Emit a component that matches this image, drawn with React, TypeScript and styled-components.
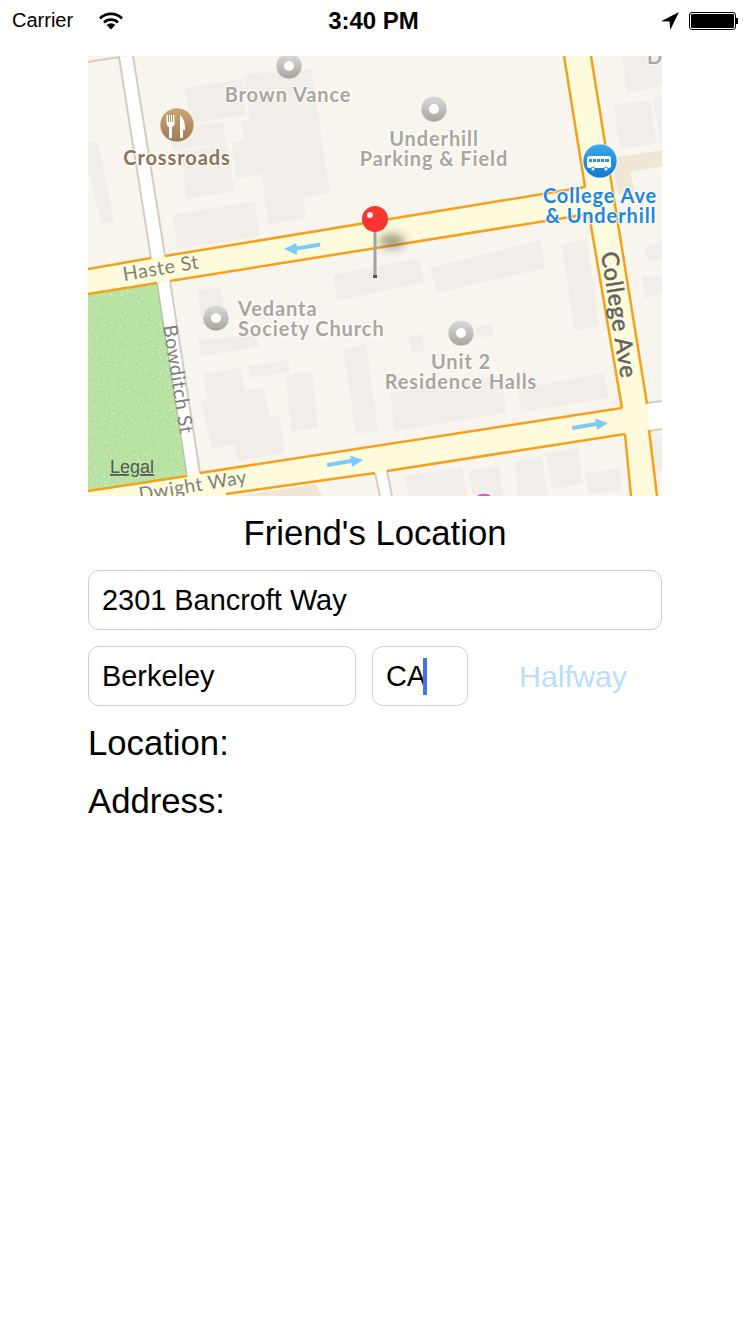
import styled, { createGlobalStyle } from 'styled-components';

const BUILDINGS: string[] = [
  '185,88 242,79 246,115 191,123',
  '171,128 223,122 226,143 173,150',
  '181,151 228,145 234,191 187,199',
  '244,74 311,69 330,192 303,198 306,219 268,224 262,175 236,178 232,143 245,141 241,122 250,119',
  '173,215 255,201 260,236 177,249',
  '88,143 98,142 114,221 101,224 88,170',
  '622,56 662,56 662,86 627,93',
  '614,104 650,101 657,143 620,149',
  '653,98 662,96 662,143 660,143',
  '644,248 662,241 662,260 648,261',
  '431,268 540,240 545,268 436,293',
  '561,244 587,239 599,326 575,331',
  '333,275 420,258 424,282 337,301',
  '198,290 221,287 225,320 202,322',
  '198,340 256,335 259,347 201,356',
  '203,374 240,368 245,391 263,388 270,416 279,415 285,453 238,462 234,444 212,449 201,401 208,399',
  '249,366 288,360 290,372 251,378',
  '286,374 312,372 318,428 291,431',
  '343,349 366,344 378,431 356,434',
  '390,393 501,375 506,413 395,431',
  '518,389 605,373 608,398 521,412',
  '409,337 422,334 424,351 411,353',
  '475,328 492,323 494,335 478,338',
  '642,276 662,276 662,293 645,299',
  '405,476 462,467 467,496 408,496',
  '469,471 499,466 503,496 473,496',
  '515,461 542,458 548,496 518,496',
  '545,453 578,448 583,484 552,489',
  '585,473 620,469 621,491 588,494',
  '650,440 662,438 662,470 655,472',
];

const ROAD_EDGES: string[] = [
  '88,269 151,258',
  '165,256 585,187',
  '88,294 157,283',
  '170,281 589,214',
  '88,491 187,476',
  '200,473 622,408',
  '226,494 375,473',
  '387,471 625,434',
  '564,56 585,187',
  '589,214 622,408',
  '591,56 647,404',
  '649,430 657,496',
  '625,434 631,496',
];

const RINGS: Array<[number, number]> = [
  [289, 66],
  [434, 109],
  [216, 318],
  [461, 333],
];

function WifiIcon(): React.ReactElement {
  return (
    <svg width="24" height="18" viewBox="0 0 24 18">
      <path d="M1 6.500a15.500 15.500 0 0 1 22 0" fill="none" stroke="#000" strokeWidth="2.6" />
      <path d="M5 10.500a10 10 0 0 1 14 0" fill="none" stroke="#000" strokeWidth="2.6" />
      <path d="M12 17.500 7.700 13a6.200 6.200 0 0 1 8.600 0z" fill="#000" />
    </svg>
  );
}

function LocationIcon(): React.ReactElement {
  return (
    <svg width="18" height="18" viewBox="0 0 18 18">
      <path d="M18 0 0 9.200l8.600.4.6 8.400z" fill="#000" />
    </svg>
  );
}

function MapView(): React.ReactElement {
  return (
    <MapSvg viewBox="88 56 574 440">
      <defs>
        <linearGradient id="ring" x1="0" y1="0" x2="0" y2="1">
          <stop offset="0" stopColor="#dedcd8" />
          <stop offset="1" stopColor="#a5a39e" />
        </linearGradient>
        <linearGradient id="food" x1="0" y1="0" x2="0" y2="1">
          <stop offset="0" stopColor="#c9a478" />
          <stop offset="1" stopColor="#a07c50" />
        </linearGradient>
        <linearGradient id="bus" x1="0" y1="0" x2="0" y2="1">
          <stop offset="0" stopColor="#3fa9ea" />
          <stop offset="1" stopColor="#1478cf" />
        </linearGradient>
        <filter id="grain" x="0" y="0" width="100%" height="100%">
          <feTurbulence type="fractalNoise" baseFrequency="0.55" numOctaves="2" seed="4" />
          <feColorMatrix values="0 0 0 0 1  0 0 0 0 1  0 0 0 0 1  0 0 0 3.2 -1.75" />
          <feComposite in2="SourceGraphic" operator="in" />
        </filter>
        <filter id="blur" x="-60%" y="-100%" width="220%" height="300%">
          <feGaussianBlur stdDeviation="5" />
        </filter>
      </defs>

      <rect x="88" y="56" width="574" height="440" fill="#f8f4ee" />
      <path d="M612 158 662 150V166L630 172 635 192 618 194z" fill="#efe6d6" />
      <path d="M240 496 315 484 322 496z" fill="#efe6d6" />
      {BUILDINGS.map((points) => (
        <polygon key={points} points={points} fill="#f1ede8" />
      ))}

      <polygon points="88,294 157,283 187,476 88,491" fill="#b7e1a0" />
      <polygon points="88,294 157,283 187,476 88,491" fill="#b7e1a0" filter="url(#grain)" opacity="0.5" />

      <polygon points="120,58 132,56 165,256 151,258" fill="#fff" />
      <polygon points="157,283 170,281 200,473 187,476" fill="#fff" />
      <polygon points="375,473 387,471 392,496 379,496" fill="#fff" />
      <polygon points="647,404 662,402 662,428 649,430" fill="#fff" />
      <polyline points="88,62 119,57 151,258" fill="none" stroke="#d5cdc1" strokeWidth="2" />
      <polyline points="133,56 165,256" fill="none" stroke="#d5cdc1" strokeWidth="2" />
      <polyline points="157,283 187,476" fill="none" stroke="#b4c49c" strokeWidth="1.5" />
      <polyline points="170,281 200,473" fill="none" stroke="#d5cdc1" strokeWidth="2" />
      <polyline points="375,473 380,496" fill="none" stroke="#d5cdc1" strokeWidth="2" />
      <polyline points="387,471 392,496" fill="none" stroke="#d5cdc1" strokeWidth="2" />
      <polyline points="647,403 662,401" fill="none" stroke="#d5cdc1" strokeWidth="2" />
      <polyline points="649,431 662,429" fill="none" stroke="#d5cdc1" strokeWidth="2" />

      <polygon points="88,269 585,187 589,214 88,294" fill="#fdfbdc" />
      <polygon points="564,56 591,56 647,404 622,408" fill="#fdfbdc" />
      <polygon points="88,491 622,408 649,430 226,496 88,496" fill="#fdfbdc" />
      <polygon points="622,408 647,404 657,496 631,496 625,434" fill="#fdfbdc" />
      {ROAD_EDGES.map((points) => (
        <RoadEdge key={points} points={points} />
      ))}

      <Arrow d="M320 242.500 297 246.500 296 243 284 249 297 255 296.800 250.500 320.500 246.500z" />
      <Arrow d="M327 463 351 459 350 455.500 363 460 352 467 351.500 463 327.500 467z" />
      <Arrow d="M572 426 596 422 595 418.500 608 423 597 430 596.500 426 572.500 430z" />

      <RoadLabel x="124" y="281" transform="rotate(-9.5 124 281)" $size={19.500}>
        Haste St
      </RoadLabel>
      <RoadLabel x="140" y="501" transform="rotate(-9.5 140 501)" $size={19}>
        Dwight Way
      </RoadLabel>
      <RoadLabel x="163" y="326" transform="rotate(81 163 326)" $size={19.500}>
        Bowditch St
      </RoadLabel>
      <RoadLabel x="601" y="253" transform="rotate(81 601 253)" $size={23.500} $dark>
        College Ave
      </RoadLabel>
      <LegalLabel x="110" y="473">
        Legal
      </LegalLabel>

      {RINGS.map(([cx, cy]) => (
        <g key={`${cx}-${cy}`}>
          <circle cx={cx} cy={cy} r="13" fill="url(#ring)" stroke="#fff" strokeOpacity="0.5" />
          <circle cx={cx} cy={cy} r="5" fill="#fff" />
        </g>
      ))}

      <circle cx="177" cy="125" r="17" fill="url(#food)" stroke="#fff" strokeOpacity="0.6" />
      <path d="M171 115v7h-1v-7h-1v7h-1v-7h-1.500v9q0 2 2.500 3v11h3v-11q2.500-1 2.500-3v-9h-1.500v7h-1v-7z" fill="#fff" />
      <path d="M180 115q5 4 5 13v2h-2v8h-3z" fill="#fff" />

      <circle cx="600" cy="161" r="17" fill="url(#bus)" stroke="#fff" strokeOpacity="0.6" />
      <path d="M590 156h18q3 0 3 3v7q0 2-2 2h-20q-2 0-2-2v-7q0-3 3-3z" fill="#fff" />
      <path d="M589 159h3v3h-3zM593 159h3v3h-3zM597 159h3v3h-3zM601 159h3v3h-3zM605 159h4v3h-4z" fill="#2a8fdc" />
      <circle cx="593" cy="169" r="2" fill="#fff" stroke="#2a8fdc" />
      <circle cx="606" cy="169" r="2" fill="#fff" stroke="#2a8fdc" />

      <PlaceLabel x="288" y="102">Brown Vance</PlaceLabel>
      <PlaceLabel x="434" y="146">Underhill</PlaceLabel>
      <PlaceLabel x="434" y="166">Parking &amp; Field</PlaceLabel>
      <PlaceLabel x="177" y="165" $tone="#8b7458">Crossroads</PlaceLabel>
      <PlaceLabel x="238" y="316" $align="start">Vedanta</PlaceLabel>
      <PlaceLabel x="238" y="336" $align="start">Society Church</PlaceLabel>
      <PlaceLabel x="461" y="369">Unit 2</PlaceLabel>
      <PlaceLabel x="461" y="389">Residence Halls</PlaceLabel>
      <PlaceLabel x="600" y="203" $tone="#1c86e0">College Ave</PlaceLabel>
      <PlaceLabel x="601" y="223" $tone="#1c86e0">&amp; Underhill</PlaceLabel>
      <PlaceLabel x="647" y="64" $align="start">D</PlaceLabel>

      <circle cx="484" cy="505" r="12" fill="#d75dbd" stroke="#fff" />

      <ellipse cx="392" cy="241" rx="13" ry="7" fill="#5f5f48" opacity="0.6" filter="url(#blur)" />
      <rect x="373.500" y="230" width="3" height="47" fill="#a2a2a6" />
      <rect x="373" y="275" width="4" height="3" fill="#55554f" />
      <circle cx="375" cy="219" r="13" fill="#fb3532" />
      <circle cx="370" cy="215" r="3" fill="#fff" opacity="0.9" />
    </MapSvg>
  );
}

function App(): React.ReactElement {
  return (
    <>
      <GlobalStyle />
      <StatusBar>
        <StatusSide>
          <Carrier>Carrier</Carrier>
          <WifiIcon />
        </StatusSide>
        <Clock>3:40 PM</Clock>
        <StatusSide $end>
          <LocationIcon />
          <Battery>
            <BatteryLevel />
          </Battery>
        </StatusSide>
      </StatusBar>

      <Content>
        <MapView />
        <Title>Friend's Location</Title>
        <Field>2301 Bancroft Way</Field>
        <Row>
          <Field $width="268px">Berkeley</Field>
          <Field $width="96px">
            CA
            <Caret />
          </Field>
          <HalfwayButton>Halfway</HalfwayButton>
        </Row>
        <InfoLabel>Location:</InfoLabel>
        <InfoLabel>Address:</InfoLabel>
      </Content>
    </>
  );
}

const GlobalStyle = createGlobalStyle`
  html, body {
    margin: 0;
    padding: 0;
    background: #fff;
    font-family: "Liberation Sans", Arial, sans-serif;
    color: #000;
  }
  body {
    width: 750px;
    height: 1334px;
    overflow: hidden;
  }
`;

const StatusBar = styled.div`
  display: grid;
  grid-template-columns: 1fr auto 1fr;
  align-items: center;
  height: 42px;
  padding: 0 12px;
  margin-bottom: 14px;
`;

const StatusSide = styled.div<{ $end?: boolean }>`
  display: flex;
  align-items: center;
  justify-content: ${({ $end }) => ($end ? 'flex-end' : 'flex-start')};
  gap: ${({ $end }) => ($end ? '10px' : '26px')};
`;

const Carrier = styled.span`
  font-size: 20px;
  margin-top: -1px;
`;

const Clock = styled.span`
  font-size: 24px;
  font-weight: 700;
  margin: -1px 0 0 -3px;
`;

const Battery = styled.div`
  position: relative;
  width: 47px;
  height: 18px;
  box-sizing: border-box;
  border: 1px solid #000;
  border-radius: 3px;
  padding: 1px;
  margin-right: 2px;

  &::after {
    content: '';
    position: absolute;
    right: -3px;
    top: 5px;
    width: 2px;
    height: 6px;
    background: #000;
  }
`;

const BatteryLevel = styled.div`
  height: 100%;
  background: #000;
  border-radius: 1px;
`;

const Content = styled.main`
  display: flex;
  flex-direction: column;
  width: 574px;
  margin: 0 auto;
`;

const MapSvg = styled.svg`
  display: block;
  width: 574px;
  height: 440px;
`;

const RoadEdge = styled.polyline`
  fill: none;
  stroke: #f5a11c;
  stroke-width: 2.5;
`;

const Arrow = styled.path`
  fill: #7ccbf8;
`;

const RoadLabel = styled.text<{ $size?: number; $dark?: boolean }>`
  font-family: Lato, "Open Sans", sans-serif;
  font-size: ${({ $size }) => $size ?? 18}px;
  font-weight: 400;
  letter-spacing: 0.6px;
  fill: ${({ $dark }) => ($dark ? '#62625f' : '#80807c')};
  stroke: ${({ $dark }) => ($dark ? '#62625f' : 'none')};
  stroke-width: 0.5px;
`;

const LegalLabel = styled.text`
  font-family: "Liberation Sans", Arial, sans-serif;
  font-size: 18px;
  fill: #55594f;
  text-decoration: underline;
`;

const PlaceLabel = styled.text<{ $tone?: string; $align?: string }>`
  font-family: Lato, "Open Sans", sans-serif;
  font-size: 20px;
  font-weight: 700;
  letter-spacing: 0.9px;
  text-anchor: ${({ $align }) => $align ?? 'middle'};
  fill: ${({ $tone }) => $tone ?? '#a9a6a0'};
  stroke: rgba(255, 255, 255, 0.75);
  stroke-width: 2.5px;
  paint-order: stroke;
`;

const Title = styled.h1`
  margin: 0;
  height: 74px;
  line-height: 74px;
  text-align: center;
  font-size: 34.700px;
  font-weight: 400;
`;

const Row = styled.div`
  display: flex;
  gap: 16px;
  margin: 16px 0 8px;
`;

const Field = styled.div<{ $width?: string }>`
  box-sizing: border-box;
  display: flex;
  align-items: center;
  width: ${({ $width }) => $width ?? '100%'};
  height: 60px;
  padding: 0 13px;
  border: 1px solid #cfcfcf;
  border-radius: 11px;
  font-size: 28.900px;
`;

const Caret = styled.span`
  width: 4px;
  height: 37px;
  margin-left: -3px;
  background: #4a70ee;
`;

const HalfwayButton = styled.button`
  flex: 1;
  height: 60px;
  padding: 0;
  border: 0;
  background: none;
  font-family: inherit;
  font-size: 30.400px;
  color: #bcdcfd;
`;

const InfoLabel = styled.div`
  height: 58px;
  line-height: 58px;
  font-size: 34.700px;
`;

export default App;
